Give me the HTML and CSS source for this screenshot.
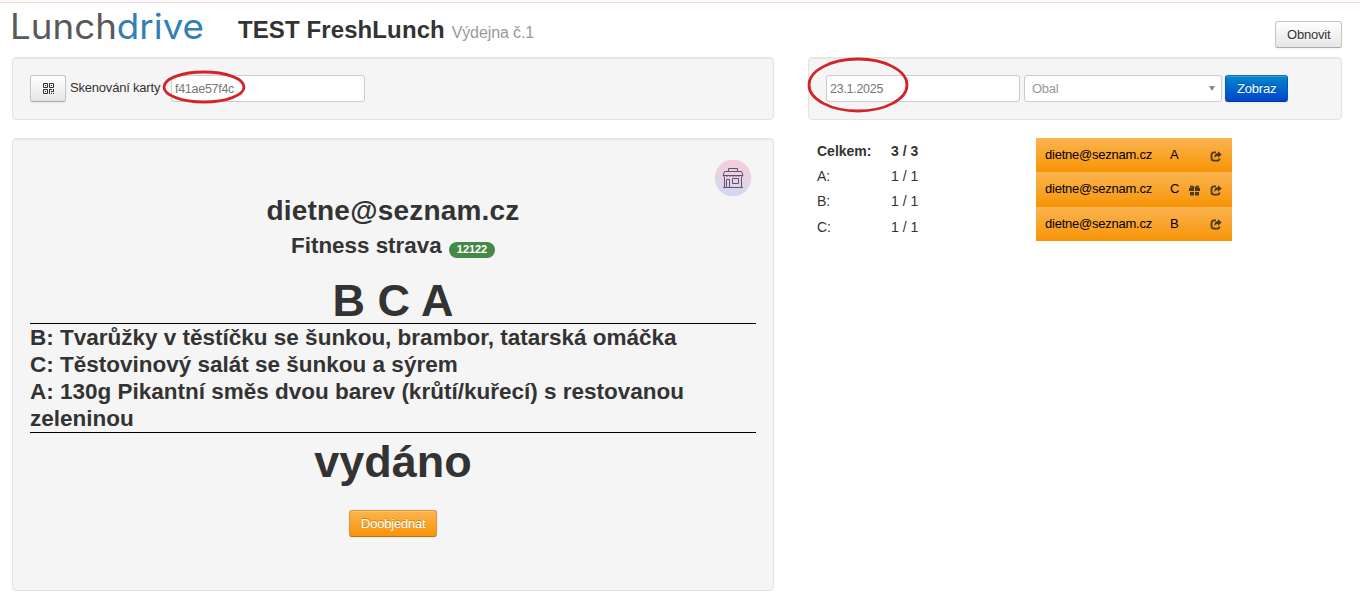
FILE: index.html
```
<!DOCTYPE html>
<html lang="cs">
<head>
    <meta charset="UTF-8">
    <title>Lunchdrive - Výdejna</title>
    <meta name="viewport" content="width=device-width, initial-scale=1.0">
    <link rel="stylesheet" href="styles.css">
</head>
<body>
    <!-- Hlavička -->
    <header class="header">
        <svg class="logo" width="196" height="40" role="img" aria-label="Lunchdrive">
            <text x="-2" y="30" textLength="194" lengthAdjust="spacingAndGlyphs"><tspan class="logo-grey">Lunch</tspan><tspan class="logo-blue">drive</tspan></text>
        </svg>
        <h1>TEST FreshLunch <small>Výdejna č.1</small></h1>
        <button class="btn refresh" type="button">Obnovit</button>
    </header>

    <main class="columns">
        <!-- Výdej jídla -->
        <section class="left">
            <form class="well bar">
                <button class="btn qr" type="button" aria-label="QR kód">
                    <svg width="11" height="11" viewBox="0 0 11 11">
                        <path fill="none" stroke="#333" d="M.5.5h4v4h-4zM6.5.5h4v4h-4zM.5 6.5h4v4h-4z"/>
                        <path fill="#333" d="M2 2h1v1H2zM8 2h1v1H8zM2 8h1v1H2zM6 6h3v1H6zM10 6h1v3h-1zM6 7h1v4H6zM8 8h2v1H8zM8 10h1v1H8zM10 10h1v1h-1z"/>
                    </svg>
                </button>
                <label for="card">Skenování karty</label>
                <div class="marked">
                    <input class="field card" id="card" type="text" value="f41ae57f4c">
                    <svg class="mark mark-card" width="84" height="34"><ellipse cx="42" cy="17" rx="40" ry="15"/></svg>
                </div>
            </form>

            <div class="well dispense">
                <svg class="shop" width="38" height="38" viewBox="0 0 38 38">
                    <defs>
                        <linearGradient id="shopBg" x1="0.6" y1="0" x2="0.4" y2="1">
                            <stop offset="0" stop-color="#f7cdd8"/>
                            <stop offset="1" stop-color="#d0d9f2"/>
                        </linearGradient>
                    </defs>
                    <circle cx="19" cy="19" r="18.3" fill="url(#shopBg)"/>
                    <g fill="none" stroke="#66506f">
                        <path d="M14.5 12.5v-3h9v3zM10.5 12.5h17l1.5 4H9zM10.5 18v10.5M27.5 18v10.5M9 28.5h20M12.5 28v-7.5h3V28M18.5 19.5h6v5h-6z"/>
                        <path d="M9 17h20" stroke-dasharray="2 1"/>
                    </g>
                </svg>
                <h2 class="customer">dietne@seznam.cz</h2>
                <h3 class="diet">Fitness strava <span class="badge">12122</span></h3>
                <div class="codes">B C A</div>
                <div class="meals">
                    <div>B: Tvarůžky v těstíčku se šunkou, brambor, tatarská omáčka</div>
                    <div>C: Těstovinový salát se šunkou a sýrem</div>
                    <div>A: 130g Pikantní směs dvou barev (krůtí/kuřecí) s restovanou zeleninou</div>
                </div>
                <div class="status">vydáno</div>
                <button class="btn btn-warning" type="button">Doobjednat</button>
            </div>
        </section>

        <!-- Přehled objednávek -->
        <section class="right">
            <form class="well bar">
                <div class="marked">
                    <input class="field date" type="text" value="23.1.2025" aria-label="Datum">
                    <svg class="mark mark-date" width="102" height="56"><ellipse cx="51" cy="28" rx="49" ry="26"/></svg>
                </div>
                <div class="field select"><span>Obal</span><i class="caret"></i></div>
                <button class="btn btn-primary" type="button">Zobraz</button>
            </form>

            <div class="summary">
                <table class="totals">
                    <tr><th>Celkem:</th><th>3 / 3</th></tr>
                    <tr><td>A:</td><td>1 / 1</td></tr>
                    <tr><td>B:</td><td>1 / 1</td></tr>
                    <tr><td>C:</td><td>1 / 1</td></tr>
                </table>

                <ul class="orders">
                    <li>
                        <span class="email">dietne@seznam.cz</span><span class="code">A</span>
                        <span class="gift"></span>
                        <svg class="share" width="12" height="11" viewBox="0 0 12 11"><use href="#icon-share"/></svg>
                    </li>
                    <li>
                        <span class="email">dietne@seznam.cz</span><span class="code">C</span>
                        <svg class="gift" width="11" height="11" viewBox="0 0 11 11"><path fill="#4a3a1c" d="M0 3h5v3H0zM6 3h5v3H6zM1 7h4v3.5H1zM6 7h4v3.5H6z"/><path fill="none" stroke="#4a3a1c" stroke-width="1.2" d="M5 3C4 .8 1.5.5 1.5 1.8S3 3 5 3M6 3C7 .8 9.5.5 9.5 1.8S8 3 6 3"/></svg>
                        <svg class="share" width="12" height="11" viewBox="0 0 12 11"><use href="#icon-share"/></svg>
                    </li>
                    <li>
                        <span class="email">dietne@seznam.cz</span><span class="code">B</span>
                        <span class="gift"></span>
                        <svg class="share" width="12" height="11" viewBox="0 0 12 11"><use href="#icon-share"/></svg>
                    </li>
                </ul>
            </div>
        </section>
    </main>

    <svg class="sprite" width="0" height="0">
        <symbol id="icon-share" viewBox="0 0 12 11">
            <path fill="none" stroke="#4a3a1c" stroke-width="1.8" d="M6 1.4H4Q1.5 1.4 1.5 4v3Q1.5 9.6 4 9.6h3q2.5 0 2.5-2.2"/>
            <path fill="#4a3a1c" d="M8 .3l3.7 3.2L8 6.7V5Q5.8 4.8 4.3 7 4.3 2.3 8 2.1z"/>
        </symbol>
    </svg>
</body>
</html>
```
FILE: styles.css
```
/* Základ */
* {
    box-sizing: border-box;
    margin: 0;
    padding: 0;
}
body {
    height: 593px;
    overflow: hidden;
    font-family: "Liberation Sans", Arial, sans-serif;
    font-size: 13px;
    line-height: 18px;
    color: #333;
    background: linear-gradient(#fff8f8 2px, #f9dad9 2px, #f9dad9 3px, #fff 3px) no-repeat;
}
/* Hlavička */
.header {
    display: flex;
    align-items: flex-start;
    height: 57px;
    padding: 3px 18px 0 12px;
}
.logo {
    margin-top: 6px;
    overflow: visible;
    font-family: Inter, sans-serif;
    font-size: 35px;
    font-weight: 400;
}
.logo-grey {
    fill: #58595b;
}
.logo-blue {
    fill: #3180b5;
}
h1 {
    margin: 12px 0 0 30px;
    font-size: 24px;
    line-height: 30px;
    letter-spacing: 0.1px;
}
h1 small {
    font-size: 16px;
    font-weight: normal;
    letter-spacing: -0.1px;
    color: #999;
}
/* Tlačítka */
.btn {
    height: 27px;
    padding: 0 11px;
    font-family: inherit;
    font-size: 13px;
    line-height: 18px;
    letter-spacing: -0.2px;
    color: #333;
    text-shadow: 0 1px 1px rgba(255, 255, 255, 0.75);
    background: linear-gradient(#fff, #e6e6e6);
    border: 1px solid #c5c5c5;
    border-bottom-color: #aaa;
    border-radius: 3px;
    box-shadow: inset 0 1px 0 rgba(255, 255, 255, 0.2), 0 1px 2px rgba(0, 0, 0, 0.05);
}
.refresh {
    width: 67px;
    margin: 18px 0 0 auto;
}
.qr {
    width: 36px;
    padding-top: 2px;
}
.btn-warning {
    width: 88px;
    color: #fff;
    text-shadow: 0 -1px 0 rgba(0, 0, 0, 0.25);
    background: linear-gradient(#fbb450, #f89406);
    border-color: #dd9535 #dd9535 #b87012;
}
.btn-primary {
    width: 63px;
    color: #fff;
    text-shadow: 0 -1px 0 rgba(0, 0, 0, 0.25);
    background: linear-gradient(#0088cc, #0044cc);
    border-color: #0871b8 #0755bb #0038a0;
}
/* Rozložení */
.columns {
    display: grid;
    grid-template-columns: 762px 534px;
    column-gap: 34px;
    padding-left: 12px;
}
.well {
    background: #f5f5f5;
    border: 1px solid #e3e3e3;
    border-radius: 4px;
    box-shadow: inset 0 1px 1px rgba(0, 0, 0, 0.05);
}
.bar {
    display: flex;
    align-items: flex-start;
    height: 63px;
    padding: 17px;
}
.bar label {
    width: 99px;
    padding: 4px 0 0 4px;
    letter-spacing: -0.2px;
    white-space: nowrap;
}
/* Formulářová pole */
.field {
    display: block;
    height: 27px;
    padding: 0 5px;
    font-family: inherit;
    font-size: 12.5px;
    letter-spacing: -0.28px;
    color: #777;
    background: #fff;
    border: 1px solid #ccc;
    border-radius: 3px;
}
.card {
    width: 194px;
    margin-left: 6px;
    padding-left: 3px;
}
.date {
    width: 194px;
    padding-left: 3px;
}
.select {
    display: flex;
    align-items: center;
    justify-content: space-between;
    width: 198px;
    margin: 0 3px 0 4px;
    padding: 0 6px 0 7px;
    font-size: 13px;
    color: #999;
}
.caret {
    border: 3px solid transparent;
    border-top: 5px solid #888;
    border-bottom: 0;
}
/* Červené označení polí */
.marked {
    position: relative;
}
.mark {
    position: absolute;
    fill: none;
    stroke: #d2232a;
    stroke-width: 2.8px;
}
.mark-card {
    top: -5px;
    left: -3px;
}
.mark-date {
    top: -18px;
    left: -19px;
}
/* Panel výdeje */
.dispense {
    position: relative;
    height: 453px;
    margin-top: 18px;
    padding: 54px 17px 0;
    text-align: center;
}
.shop {
    position: absolute;
    top: 20px;
    right: 21px;
}
.customer {
    font-size: 28px;
    line-height: 36px;
    letter-spacing: 0.2px;
}
.diet {
    height: 54px;
    font-size: 22.4px;
    line-height: 34px;
}
.badge {
    display: inline-block;
    height: 16px;
    margin-left: 1px;
    padding: 0 8px;
    font-size: 11px;
    line-height: 15px;
    letter-spacing: -0.1px;
    color: #fff;
    vertical-align: 0;
    background: #468847;
    border-radius: 9px;
}
.codes {
    height: 40px;
    font-size: 45px;
    font-weight: bold;
    line-height: 36px;
}
.meals {
    font-size: 22.5px;
    font-weight: bold;
    line-height: 27px;
    text-align: left;
    border-top: 1px solid #000;
    border-bottom: 1px solid #000;
}
.status {
    height: 77px;
    font-size: 45px;
    font-weight: bold;
    line-height: 58px;
}
/* Souhrn */
.summary {
    display: flex;
    align-items: flex-start;
    padding-top: 18px;
}
.totals {
    width: 228px;
    border-collapse: collapse;
    font-size: 14px;
}
.totals td,
.totals th {
    height: 25.3px;
    padding-left: 9px;
    text-align: left;
}
.totals th:first-child {
    width: 74px;
}
.orders {
    width: 196px;
    list-style: none;
    color: #000;
}
.orders li {
    display: flex;
    align-items: center;
    height: 34.33px;
    padding: 0 10px 0 9px;
    background: linear-gradient(#fbb450, #f89406);
}
.email {
    width: 125px;
    letter-spacing: -0.24px;
}
.code {
    width: 19px;
}
.gift {
    width: 11px;
    margin-top: 2px;
}
.share {
    margin: 2px 0 0 auto;
}
.sprite {
    position: absolute;
}
```
